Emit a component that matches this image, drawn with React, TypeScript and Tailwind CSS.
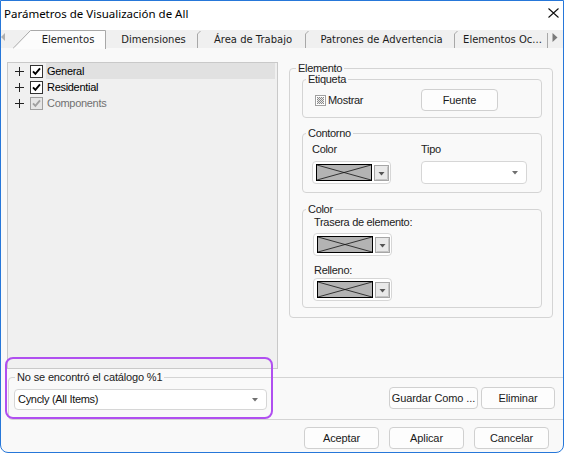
import React from 'react';

const sans = "font-['Liberation_Sans',Arial,sans-serif]";
const label = 'text-[11px] leading-[13px] tracking-[-0.3px]';

function Check({ disabled = false }: { disabled?: boolean }) {
  return (
    <svg width="13" height="13" className="block shrink-0">
      <rect
        x="0.5"
        y="0.5"
        width="12"
        height="12"
        fill={disabled ? '#e6e6e6' : '#fff'}
        stroke={disabled ? '#a0a0a0' : '#333'}
      />
      <path
        d="M3 6.3 L5.4 8.9 L10 3.4"
        fill="none"
        stroke={disabled ? '#a0a0a0' : '#000'}
        strokeWidth="1.9"
      />
    </svg>
  );
}

function Plus() {
  return (
    <svg width="9" height="9" className="block shrink-0">
      <path d="M0 4.5 H9 M4.5 0 V9" stroke="#222" strokeWidth="1" />
    </svg>
  );
}

// fieldset with the padding on an inner box, so the legend sits by the border
function Group({
  title,
  legendClass,
  className,
  bodyClass,
  children,
}: {
  title: string;
  legendClass: string;
  className?: string;
  bodyClass?: string;
  children: React.ReactNode;
}) {
  return (
    <fieldset className={`rounded-[4px] border border-[#d4d4d4] ${className ?? ''}`}>
      <legend className={`px-[2px] text-[11px] leading-[12px] tracking-[-0.3px] text-[#222] ${legendClass}`}>
        {title}
      </legend>
      <div className={bodyClass}>{children}</div>
    </fieldset>
  );
}

function ColorPick() {
  return (
    <div className="flex h-[23px] w-[79px] items-center rounded-[4px] border border-[#d6d6d6] bg-white pl-[3px]">
      <svg width="56" height="17" className="block shrink-0">
        <rect x="0.5" y="0.5" width="55" height="16" fill="#b3b3b3" stroke="#000" />
        <path d="M1 1 L55 16 M1 16 L55 1" stroke="#111" strokeWidth="0.8" />
      </svg>
      <svg width="15" height="16" className="ml-[2px] block shrink-0">
        <rect x="0.5" y="0.5" width="14" height="15" fill="#e9e9e9" stroke="#a6a6a6" />
        <path d="M1.5 14.5 H13.5 V1.5" fill="none" stroke="#c4c4c4" />
        <path d="M4.5 7 H10.5 L7.5 10.5 Z" fill="#555" />
      </svg>
    </div>
  );
}

function DropArrow() {
  return (
    <svg width="6" height="4" className="block shrink-0">
      <path d="M0 0 H6 L3 3.5 Z" fill="#707070" />
    </svg>
  );
}

function Button({ text, w }: { text: string; w: string }) {
  return (
    <button
      className={`flex h-[22px] ${w} items-center justify-center rounded-[4px] border border-[#d0d0d0] bg-[#fdfdfd] text-[11px] tracking-[-0.1px] text-[#1a1a1a]`}
    >
      {text}
    </button>
  );
}

const tabs = [
  { name: 'Dimensiones', w: 'w-[91px]', first: true },
  { name: 'Área de Trabajo', w: 'w-[108px]' },
  { name: 'Patrones de Advertencia', w: 'w-[149px]' },
  { name: 'Elementos Oc...', w: 'w-[93px]' },
];

const tree = [
  { name: 'General', selected: true },
  { name: 'Residential' },
  { name: 'Components', disabled: true },
];

export default function App() {
  return (
    <div
      className={`relative flex h-[453px] w-[564px] flex-col overflow-hidden rounded-b-[8px] border border-[#2677d9] bg-[#f9f9f9] ${sans}`}
    >
      {/* title bar */}
      <div className="flex h-[29px] shrink-0 justify-between bg-white pl-[3px] pr-[4px]">
        <span className="self-center pb-[3px] font-['Noto_Sans',sans-serif] text-[11.5px] text-black">
          Parámetros de Visualización de All
        </span>
        <svg width="11" height="10" className="mt-[7px] block">
          <path d="M0.5 0.5 L10.5 9.5 M10.5 0.5 L0.5 9.5" stroke="#111" strokeWidth="1.1" />
        </svg>
      </div>

      {/* tab strip */}
      <div className="flex h-[18px] shrink-0 items-stretch bg-[#f0f0f0] font-['DejaVu_Sans',sans-serif] text-[10px] text-[#1c1c1c]">
        <svg width="4" height="18" className="block shrink-0">
          <path d="M0 7 L4 3 V11 Z" fill="#b0b0b0" />
        </svg>
        <div className="relative ml-[8px] flex w-[93px] items-center justify-center pl-[17px]">
          <svg width="93" height="19" className="absolute left-0 top-0">
            <path d="M0 18.5 L17.5 0.5 H92.5 V19" fill="#fcfcfc" stroke="#a8a8a8" />
            <path d="M1 18.5 H92" stroke="#fcfcfc" strokeWidth="1.5" />
          </svg>
          <span className="relative">Elementos</span>
        </div>
        {tabs.map((t) => (
          <div key={t.name} className={`relative flex ${t.w} items-center justify-center pl-[4px]`}>
            {!t.first && (
              <svg width="5" height="18" className="absolute left-0 top-0">
                <path d="M0.5 18 V4 L3.5 1" fill="none" stroke="#a8a8a8" />
              </svg>
            )}
            <span>{t.name}</span>
          </div>
        ))}
        <div className="mt-[3px] w-px bg-[#a8a8a8]" />
        <svg width="10" height="18" className="ml-[4px] block shrink-0">
          <path d="M0.5 3 L5.5 7.5 L0.5 12 Z" fill="#7a7a7a" />
        </svg>
      </div>

      {/* content */}
      <div className="flex flex-1 flex-col">
        <div className="mt-[14px] flex items-start">
          <div className="ml-[6px] h-[307px] w-[271px] border border-[#c9c9c9] bg-[#f0f0f0] pl-[7px] pr-[2px]">
            {tree.map((r) => (
              <div key={r.name} className="flex h-[16px] items-center">
                <Plus />
                <div className="ml-[6px]">
                  <Check disabled={r.disabled} />
                </div>
                <div
                  className={`ml-[3px] flex h-full flex-1 items-center pl-[1px] ${label} ${
                    r.selected ? 'bg-[#e1e1e1]' : ''
                  } ${r.disabled ? 'text-[#707070]' : 'text-black'}`}
                >
                  {r.name}
                </div>
              </div>
            ))}
          </div>

          <Group
            title="Elemento"
            legendClass="ml-[6px]"
            className="ml-[11px] w-[264px]"
            bodyClass="pb-[9px] pl-[12px] pr-[10px]"
          >
            <Group
              title="Etiqueta"
              legendClass="ml-[3px]"
              className="-mt-[1px]"
              bodyClass="pb-[6px] pl-[12px] pt-[4px]"
            >
              <div className="flex items-center">
                <div className="flex w-[106px] items-center">
                  <svg width="11" height="11" className="block shrink-0">
                    <defs>
                      <pattern id="dither" width="2" height="2" patternUnits="userSpaceOnUse">
                        <rect width="2" height="2" fill="#e8e8e8" />
                        <rect width="1" height="1" fill="#8a8a8a" />
                        <rect x="1" y="1" width="1" height="1" fill="#8a8a8a" />
                      </pattern>
                    </defs>
                    <rect x="0.5" y="0.5" width="10" height="10" fill="#fff" stroke="#a0a0a0" />
                    <rect x="2" y="2" width="7" height="7" fill="url(#dither)" />
                  </svg>
                  <span className={`ml-[2px] ${label} text-[#222]`}>Mostrar</span>
                </div>
                <Button text="Fuente" w="w-[77px]" />
              </div>
            </Group>

            <Group
              title="Contorno"
              legendClass="ml-[3px]"
              className="mt-[9px]"
              bodyClass="pb-[8px] pl-[9px] pt-[4px]"
            >
              <div className="flex">
                <div className="w-[109px]">
                  <div className={`${label} text-[#222]`}>Color</div>
                  <div className="mt-[5px]">
                    <ColorPick />
                  </div>
                </div>
                <div>
                  <div className={`${label} text-[#222]`}>Tipo</div>
                  <div className="mt-[5px] flex h-[23px] w-[106px] items-center justify-end rounded-[4px] border border-[#d6d6d6] bg-white pr-[8px]">
                    <DropArrow />
                  </div>
                </div>
              </div>
            </Group>

            <Group
              title="Color"
              legendClass="ml-[3px]"
              className="mt-[10px]"
              bodyClass="pb-[6px] pl-[10px] pt-[1px]"
            >
              <div className={`pl-[1px] ${label} text-[#222]`}>Trasera de elemento:</div>
              <div className="mt-[4px]">
                <ColorPick />
              </div>
              <div className={`mt-[8px] pl-[1px] ${label} text-[#222]`}>Relleno:</div>
              <div className="mt-[1px]">
                <ColorPick />
              </div>
            </Group>
          </Group>
        </div>

        <fieldset className="ml-[7px] mr-[-4px] mt-[2px] rounded-[4px] border border-[#d4d4d4]">
          <legend className="ml-[6px] px-[2px] text-[11px] leading-[12px] tracking-[-0.15px] text-[#222]">
            No se encontró el catálogo %1
          </legend>
          <div className="flex items-start pb-[9px] pl-[5px] pr-[11px] pt-[4px]">
            <div className="mt-[2px] flex h-[21px] w-[253px] items-center justify-between rounded-[4px] border border-[#d6d6d6] bg-white pl-[3px] pr-[8px]">
              <span className={`${label} text-[#111]`}>Cyncly (All Items)</span>
              <DropArrow />
            </div>
            <div className="ml-auto flex gap-[3px]">
              <Button text="Guardar Como ..." w="w-[89px]" />
              <Button text="Eliminar" w="w-[74px]" />
            </div>
          </div>
        </fieldset>

        <div className="mt-[7px] flex justify-end gap-[10px] pr-[14px]">
          <Button text="Aceptar" w="w-[75px]" />
          <Button text="Aplicar" w="w-[75px]" />
          <Button text="Cancelar" w="w-[75px]" />
        </div>
      </div>

      {/* highlight annotation */}
      <div className="pointer-events-none absolute left-[4px] top-[356px] h-[62px] w-[268px] rounded-[8px] border-2 border-[#b04ff0]" />
    </div>
  );
}
